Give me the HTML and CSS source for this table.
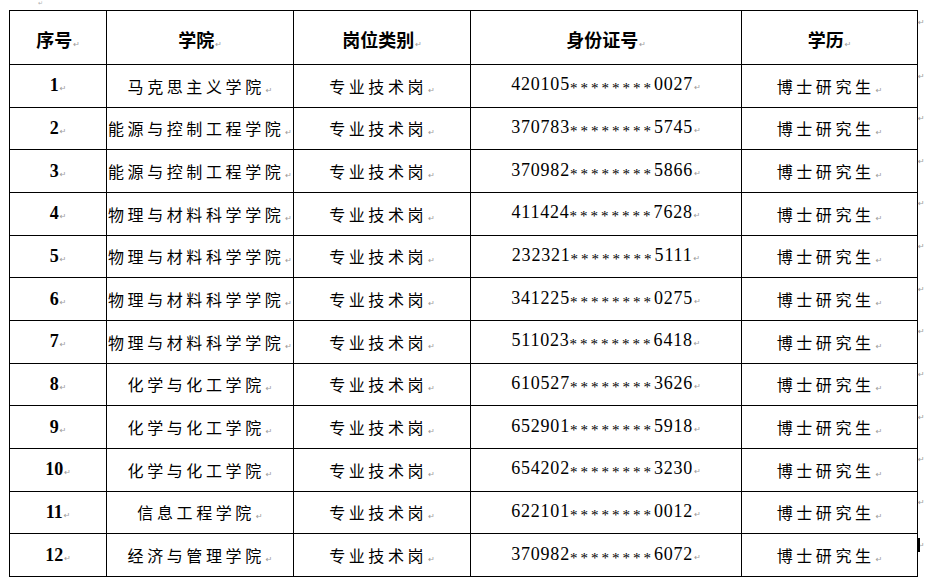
FILE: index.html
```html
<!DOCTYPE html>
<html lang="zh">
<head>
<meta charset="utf-8">
<title>名单</title>
<link rel="stylesheet" href="styles.css">
</head>
<body>
<div class="top-mark"><span class="pm">↵</span></div>
<table class="list">
  <colgroup>
    <col class="c1"><col class="c2"><col class="c3"><col class="c4"><col class="c5"><col class="c6">
  </colgroup>
  <thead>
    <tr class="head">
      <th>序号<span class="pm">↵</span></th>
      <th>学院<span class="pm">↵</span></th>
      <th>岗位类别<span class="pm">↵</span></th>
      <th>身份证号<span class="pm">↵</span></th>
      <th>学历<span class="pm">↵</span></th>
      <td class="end"><span class="pm">↵</span></td>
    </tr>
  </thead>
  <tbody>
    <tr><td class="no">1<span class="pm">↵</span></td><td class="cn">马克思主义学院<span class="pm">↵</span></td><td class="cn">专业技术岗<span class="pm">↵</span></td><td class="id">420105<span class="mask">********</span>0027<span class="pm">↵</span></td><td class="cn">博士研究生<span class="pm">↵</span></td><td class="end"><span class="pm">↵</span></td></tr>
    <tr><td class="no">2<span class="pm">↵</span></td><td class="cn">能源与控制工程学院<span class="pm">↵</span></td><td class="cn">专业技术岗<span class="pm">↵</span></td><td class="id">370783<span class="mask">********</span>5745<span class="pm">↵</span></td><td class="cn">博士研究生<span class="pm">↵</span></td><td class="end"><span class="pm">↵</span></td></tr>
    <tr><td class="no">3<span class="pm">↵</span></td><td class="cn">能源与控制工程学院<span class="pm">↵</span></td><td class="cn">专业技术岗<span class="pm">↵</span></td><td class="id">370982<span class="mask">********</span>5866<span class="pm">↵</span></td><td class="cn">博士研究生<span class="pm">↵</span></td><td class="end"><span class="pm">↵</span></td></tr>
    <tr><td class="no">4<span class="pm">↵</span></td><td class="cn">物理与材料科学学院<span class="pm">↵</span></td><td class="cn">专业技术岗<span class="pm">↵</span></td><td class="id">411424<span class="mask">********</span>7628<span class="pm">↵</span></td><td class="cn">博士研究生<span class="pm">↵</span></td><td class="end"><span class="pm">↵</span></td></tr>
    <tr><td class="no">5<span class="pm">↵</span></td><td class="cn">物理与材料科学学院<span class="pm">↵</span></td><td class="cn">专业技术岗<span class="pm">↵</span></td><td class="id">232321<span class="mask">********</span>5111<span class="pm">↵</span></td><td class="cn">博士研究生<span class="pm">↵</span></td><td class="end"><span class="pm">↵</span></td></tr>
    <tr><td class="no">6<span class="pm">↵</span></td><td class="cn">物理与材料科学学院<span class="pm">↵</span></td><td class="cn">专业技术岗<span class="pm">↵</span></td><td class="id">341225<span class="mask">********</span>0275<span class="pm">↵</span></td><td class="cn">博士研究生<span class="pm">↵</span></td><td class="end"><span class="pm">↵</span></td></tr>
    <tr><td class="no">7<span class="pm">↵</span></td><td class="cn">物理与材料科学学院<span class="pm">↵</span></td><td class="cn">专业技术岗<span class="pm">↵</span></td><td class="id">511023<span class="mask">********</span>6418<span class="pm">↵</span></td><td class="cn">博士研究生<span class="pm">↵</span></td><td class="end"><span class="pm">↵</span></td></tr>
    <tr><td class="no">8<span class="pm">↵</span></td><td class="cn">化学与化工学院<span class="pm">↵</span></td><td class="cn">专业技术岗<span class="pm">↵</span></td><td class="id">610527<span class="mask">********</span>3626<span class="pm">↵</span></td><td class="cn">博士研究生<span class="pm">↵</span></td><td class="end"><span class="pm">↵</span></td></tr>
    <tr><td class="no">9<span class="pm">↵</span></td><td class="cn">化学与化工学院<span class="pm">↵</span></td><td class="cn">专业技术岗<span class="pm">↵</span></td><td class="id">652901<span class="mask">********</span>5918<span class="pm">↵</span></td><td class="cn">博士研究生<span class="pm">↵</span></td><td class="end"><span class="pm">↵</span></td></tr>
    <tr><td class="no">10<span class="pm">↵</span></td><td class="cn">化学与化工学院<span class="pm">↵</span></td><td class="cn">专业技术岗<span class="pm">↵</span></td><td class="id">654202<span class="mask">********</span>3230<span class="pm">↵</span></td><td class="cn">博士研究生<span class="pm">↵</span></td><td class="end"><span class="pm">↵</span></td></tr>
    <tr><td class="no">11<span class="pm">↵</span></td><td class="cn">信息工程学院<span class="pm">↵</span></td><td class="cn">专业技术岗<span class="pm">↵</span></td><td class="id">622101<span class="mask">********</span>0012<span class="pm">↵</span></td><td class="cn">博士研究生<span class="pm">↵</span></td><td class="end"><span class="pm">↵</span></td></tr>
    <tr><td class="no">12<span class="pm">↵</span></td><td class="cn">经济与管理学院<span class="pm">↵</span></td><td class="cn">专业技术岗<span class="pm">↵</span></td><td class="id">370982<span class="mask">********</span>6072<span class="pm">↵</span></td><td class="cn">博士研究生<span class="pm">↵</span></td><td class="end"><span class="handle"></span><span class="pm">↵</span></td></tr>
  </tbody>
</table>
</body>
</html>
```

FILE: styles.css
```css
html, body {
  margin: 0;
  padding: 0;
  background: #ffffff;
}

body {
  font-family: "Liberation Serif", "Noto Sans CJK SC", serif;
  color: #000000;
}

.top-mark {
  height: 10px;
  padding-left: 38px;
  font-size: 6px;
  line-height: 6px;
}

.top-mark .pm {
  font-size: 6px;
  margin-left: 0;
  color: #b0b0b0;
}

.pm {
  font-family: "DejaVu Sans", sans-serif;
  font-size: 8px;
  font-weight: normal;
  color: #9a9a9a;
  letter-spacing: 0;
  margin-left: 1px;
}

.list {
  border-collapse: collapse;
  table-layout: fixed;
  margin-left: 9px;
  width: 917px;
}

.c1 { width: 97px; }
.c2 { width: 187px; }
.c3 { width: 177px; }
.c4 { width: 271px; }
.c5 { width: 176px; }
.c6 { width: 9px; }

.list th,
.list td {
  border: 1px solid #000000;
  padding: 0;
  text-align: center;
  white-space: nowrap;
  overflow: visible;
}

.list .end {
  border: none;
  border-left: 1px solid #000000;
  vertical-align: top;
  text-align: left;
  padding-top: 4px;
  line-height: 10px;
}

.list .end .pm {
  margin-left: 0;
}

.head {
  height: 54px;
}

.head th {
  padding-top: 9px;
  font-family: "Noto Sans CJK SC", sans-serif;
  font-weight: bold;
  font-size: 18px;
  line-height: 20px;
}

tbody tr {
  height: 42.67px;
}

.no {
  font-family: "Liberation Serif", serif;
  font-weight: bold;
  font-size: 18px;
}

.cn {
  font-family: "Noto Sans CJK SC", sans-serif;
  font-size: 16px;
  letter-spacing: 3.6px;
}

.id {
  font-family: "Liberation Serif", serif;
  font-size: 18px;
  letter-spacing: 0.8px;
}

.mask {
  font-size: 15px;
  letter-spacing: 3px;
  vertical-align: -3px;
  color: #000000;
}

.handle {
  display: block;
  position: absolute;
  width: 3px;
  height: 14px;
  margin-left: -1px;
  background: #000000;
}
```
